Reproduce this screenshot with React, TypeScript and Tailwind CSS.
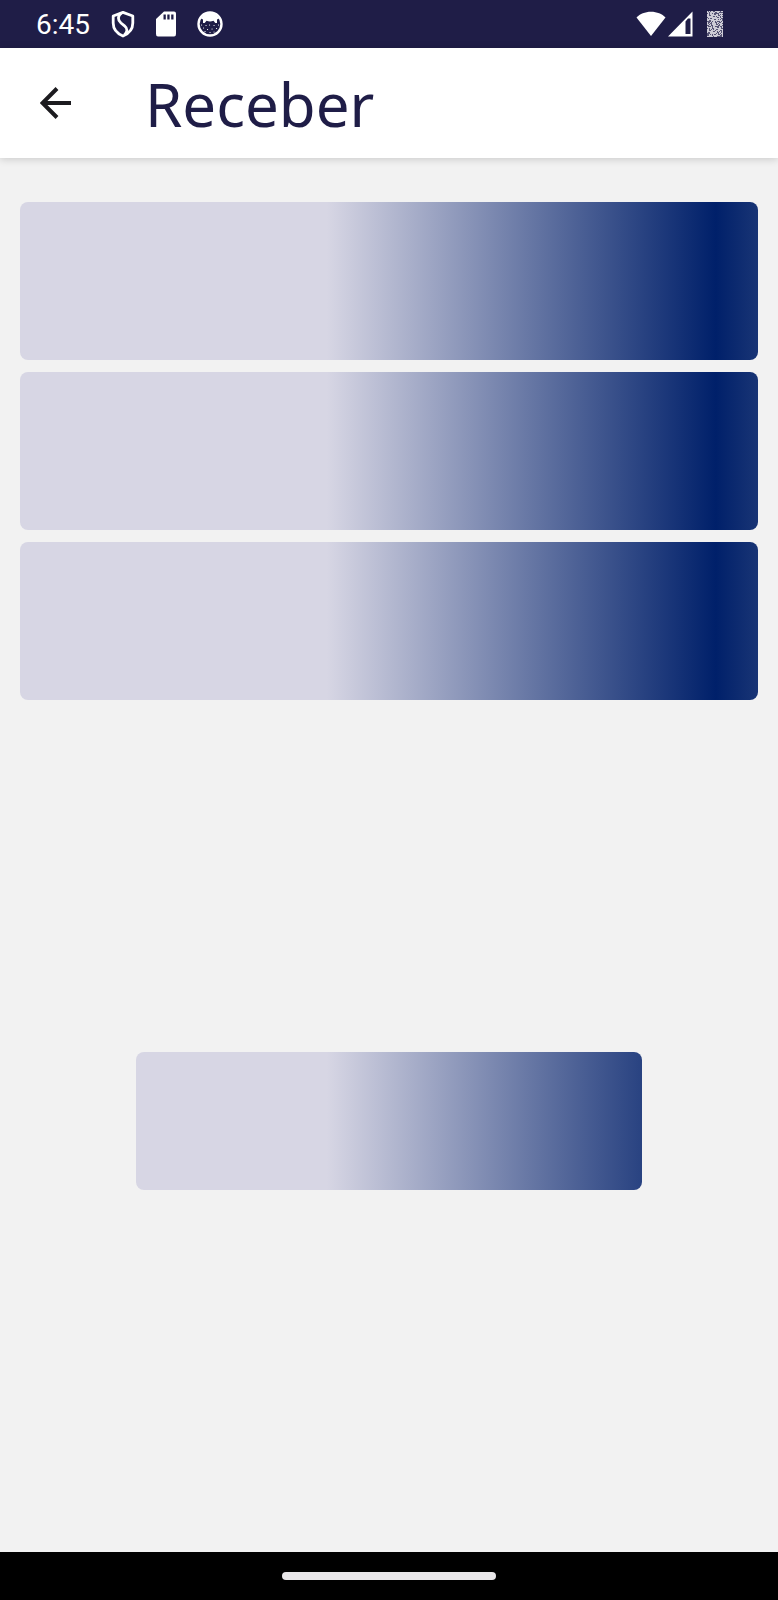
const shimmer =
  "bg-[linear-gradient(90deg,#d7d6e4_0%,#d7d6e4_42%,#00206a_92%,#243e7a_100%)] bg-fixed";

function ShieldIcon() {
  return (
    <svg viewBox="0 0 24 28" className="h-7 w-6" fill="none" stroke="#fff" strokeWidth="2.8" aria-hidden="true">
      <path d="M12 2.4 L21.800 6 V13 C21.800 19 18 23.500 12 26 C6 23.500 2.200 19 2.200 13 V6 Z" strokeLinejoin="round" />
      <path d="M10.500 3 C6.500 6 6.500 10 10 13 L13.500 15.800 C17 18.800 16.500 21.500 13.500 25" />
    </svg>
  );
}

function SdCardIcon() {
  return (
    <svg viewBox="0 0 20 26" className="h-[26px] w-5" aria-hidden="true">
      <path
        fill="#fff"
        fillRule="evenodd"
        d="M8 0.500 H18 Q20 0.500 20 2.500 V23 Q20 25.500 18 25.500 H2 Q0 25.500 0 23 V8 Z M7.500 3.500 V8.500 H9.800 V3.500 Z M11.300 3.500 V8.500 H13.600 V3.500 Z M15.200 3.500 V8.500 H17.500 V3.500 Z"
      />
    </svg>
  );
}

function CatIcon() {
  return (
    <svg viewBox="0 0 26 26" className="size-[26px]" aria-hidden="true">
      <circle cx="13" cy="13" r="11.500" fill="none" stroke="#fff" strokeWidth="2.400" />
      <path
        fill="#fff"
        d="M4 7.500 C6 4 9 1 13 1 S20 4 22 7.500 L20 8.500 V12 L18.300 12 L16.500 9.800 C14 10.800 12 10.800 9.500 9.800 L7.700 12 L6 12 V8.500 Z"
      />
      <path
        stroke="#fff"
        strokeWidth="1.100"
        strokeLinecap="round"
        d="M4.500 14h.1M9 14.500h.1M17 14.500h.1M21.500 14h.1M6.500 17h.1M12.500 14h.1M15 18h.1M19.500 17.500h.1M10.500 18.500h.1M13 21.500h.1M17 21h.1M8 20.500h.1"
      />
    </svg>
  );
}

function WifiIcon() {
  return (
    <svg viewBox="0 0 30 26" className="h-[26px] w-[30px]" aria-hidden="true">
      <path fill="#fff" d="M15 25 L0.500 6.500 C4 3 9 0.800 15 0.800 S26 3 29.500 6.500 Z" />
    </svg>
  );
}

function SignalIcon() {
  return (
    <svg viewBox="0 0 25 26" className="h-[26px] w-[25px]" aria-hidden="true">
      <path fill="#fff" fillRule="evenodd" d="M24.500 0.500 V25.500 H0 Z M17.500 10.500 V23 H22.500 V7.500 H20 Z" />
    </svg>
  );
}

function BatteryIcon() {
  const cells = Array.from({ length: 16 * 26 }, (_, i) => i).filter(
    (i) => ((i * 7919 + ((i * i) % 613) * 31) >> 3) % 5 < 3,
  );
  return (
    <svg viewBox="0 0 16 26" className="h-[26px] w-4" aria-hidden="true">
      <rect width="16" height="26" fill="#fff" opacity="0.25" />
      {cells.map((i) => (
        <rect key={i} x={i % 16} y={Math.floor(i / 16)} width="1" height="1" fill="#fff" opacity="0.7" />
      ))}
    </svg>
  );
}

function StatusBar() {
  return (
    <div className="flex h-12 items-center justify-between bg-[#1f1d47] pr-[55px] pl-9 text-white">
      <div className="flex items-center">
        <span className="w-[75px] pt-0.5 font-[Roboto,sans-serif] text-[28px] leading-8">6:45</span>
        <div className="flex items-center gap-[21px]">
          <ShieldIcon />
          <SdCardIcon />
          <CatIcon />
        </div>
      </div>
      <div className="flex items-center">
        <WifiIcon />
        <span className="mr-3.5 ml-0.5 flex">
          <SignalIcon />
        </span>
        <BatteryIcon />
      </div>
    </div>
  );
}

export default function App() {
  return (
    <div className="flex min-h-screen flex-col bg-[#f2f2f2]">
      <StatusBar />
      <header className="flex h-[110px] items-center bg-white pl-10 shadow-[0_1px_8px_rgba(0,0,0,0.18)]">
        <button type="button" aria-label="Voltar" className="mr-[73px] flex">
          <svg viewBox="0 0 32 32" className="size-8" fill="none" stroke="#1c1b1f" strokeWidth="4" aria-hidden="true">
            <path d="M31 16 H3 M17 1.500 L2.500 16 L17 30.500" />
          </svg>
        </button>
        <h1 className="pt-0.5 font-['Noto_Sans',sans-serif] text-[60px] leading-[80px] text-[#1f1d47]">Receber</h1>
      </header>
      <main className="flex flex-1 flex-col px-5 pt-11" aria-busy="true">
        <div className="flex flex-col gap-3">
          <div className={`h-[158px] rounded-lg ${shimmer}`} />
          <div className={`h-[158px] rounded-lg ${shimmer}`} />
          <div className={`h-[158px] rounded-lg ${shimmer}`} />
        </div>
        <div className="px-[116px] pt-[352px]">
          <div className={`h-[138px] rounded-lg ${shimmer}`} />
        </div>
      </main>
      <footer className="flex h-12 items-center justify-center bg-black">
        <div className="h-2 w-[214px] rounded-full bg-[#e9e7e9]" />
      </footer>
    </div>
  );
}
